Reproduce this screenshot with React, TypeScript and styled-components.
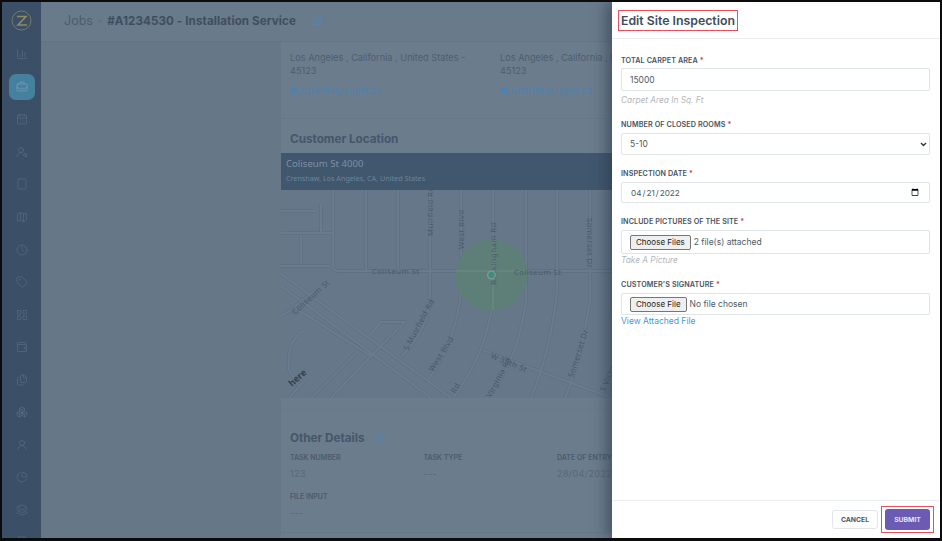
import styled, { createGlobalStyle } from 'styled-components';
import {
  BriefcaseBusiness,
  CalendarDays,
  ChartColumn,
  ChartPie,
  Boxes,
  Clock,
  Files,
  Layers,
  LayoutGrid,
  Mail,
  Map as MapIcon,
  SquarePen,
  Tablet,
  Tag,
  UserRound,
  UserRoundSearch,
  Wallet,
} from 'lucide-react';

const GlobalStyle = createGlobalStyle`
  html, body {
    margin: 0;
    padding: 0;
    width: 942px;
    height: 541px;
    overflow: hidden;
    background: #000;
    font-family: 'Inter', 'Liberation Sans', sans-serif;
  }
  * { box-sizing: border-box; }
`;

const Frame = styled.div`
  position: relative;
  display: flex;
  width: 942px;
  height: 541px;
  overflow: hidden;
  border: 2px solid #0c0c0c;
  border-bottom-width: 3px;
  background: #667788;
`;

const Sidebar = styled.aside`
  display: flex;
  flex-direction: column;
  flex: 0 0 39px;
  overflow: hidden;
  background: #3b4f66;
`;

const LogoSlot = styled.div`
  display: flex;
  flex: 0 0 36px;
  align-items: center;
  justify-content: center;
`;

const SideItem = styled.div<{ $active?: boolean }>`
  display: flex;
  flex: 0 0 32.55px;
  align-items: center;
  justify-content: center;
  color: ${(p) => (p.$active ? '#7fa6bf' : '#5d7187')};

  span {
    display: flex;
    width: 26px;
    height: 26px;
    align-items: center;
    justify-content: center;
    border-radius: 7px;
    background: ${(p) => (p.$active ? '#46809f' : 'transparent')};
  }
`;

const Main = styled.div`
  display: flex;
  flex: 1;
  flex-direction: column;
  min-width: 0;
`;

const Header = styled.header`
  display: flex;
  flex: 0 0 40px;
  align-items: center;
  padding-left: 23px;
  padding-bottom: 2px;
  border-bottom: 1px solid #64758a;
  background: #697a8b;
  color: #4b5a6b;
  font-size: 12.5px;
`;

const Crumb = styled.span`
  color: #4d5d6e;
`;

const CrumbSep = styled.span`
  margin: 0 5px 0 4px;
  color: #5b6b7c;
  font-size: 8px;
`;

const JobTitle = styled.span`
  color: #3f4e5f;
  font-size: 11.6px;
  font-weight: 700;
  letter-spacing: 0.1px;
`;

const EditIcon = styled(SquarePen)`
  color: #5088b8;
`;

const HeaderEdit = styled(EditIcon)`
  margin-left: 16px;
`;

const Workspace = styled.div`
  display: flex;
  flex: 1;
  min-height: 0;
`;

const Blank = styled.div`
  flex: 0 0 240px;
`;

const Content = styled.div`
  flex: 1;
  min-width: 0;
  background: #6b7c8d;
  color: #4e5e6f;
  font-size: 9.2px;
`;

const Addresses = styled.div`
  display: flex;
  height: 77px;
  padding: 9px 0 0 9px;
  border-bottom: 1px solid #677889;
`;

const Address = styled.div`
  width: 210px;
  line-height: 13px;

  p {
    width: 190px;
    margin: 0;
  }
`;

const MailLink = styled.div`
  display: flex;
  align-items: center;
  gap: 2px;
  margin-top: 7px;
  color: #4d82b0;
`;

const SectionTitle = styled.h2`
  display: flex;
  align-items: center;
  gap: 9px;
  margin: 0;
  padding-left: 9px;
  color: #45566a;
  font-size: 11.7px;
  font-weight: 700;
`;

const LocationTitle = styled(SectionTitle)`
  height: 34px;
  padding-top: 6px;
`;

const Banner = styled.div`
  height: 37px;
  padding: 4px 5px 0;
  background: #40576e;
  color: #7d90a4;

  strong {
    display: block;
    font-family: 'Noto Sans', sans-serif;
    font-size: 9.6px;
    font-weight: 400;
    line-height: 14px;
  }

  small {
    display: block;
    margin-top: 3px;
    color: #6f8499;
    font-family: 'Noto Sans', sans-serif;
    font-size: 7.2px;
    line-height: 9px;
  }
`;

const MapBox = styled.div`
  height: 208px;
  overflow: hidden;
  background: #66778a;

  svg {
    display: block;
  }
`;

const OtherDetails = styled.div`
  height: 124px;
  margin-top: 11px;
  padding-top: 21px;
  border-top: 1px solid #687989;
  border-bottom: 1px solid #677889;
`;

const DetailGrid = styled.div`
  display: grid;
  grid-template-columns: 133.5px 133.5px 133.5px;
  row-gap: 13px;
  margin-top: 8px;
  padding: 0 0 0 9px;
`;

const Detail = styled.div`
  line-height: 10px;

  b {
    display: block;
    color: #4c5b6c;
    font-size: 7px;
    font-weight: 600;
  }

  span {
    display: block;
    margin-top: 6px;
    color: #586879;
    font-size: 9px;
    letter-spacing: 0.4px;
  }
`;

const Drawer = styled.section`
  position: absolute;
  top: 0;
  right: 0;
  bottom: 0;
  display: flex;
  flex-direction: column;
  width: 328px;
  background: #fff;
  box-shadow: -6px 0 12px rgba(38, 50, 66, 0.5);
`;

const DrawerHead = styled.div`
  display: flex;
  flex: 0 0 37px;
  align-items: center;
  padding: 0 0 0 6px;
  border-bottom: 1px solid #e9edf1;
`;

const Marked = styled.div`
  border: 1px solid #e8505b;
`;

const DrawerTitle = styled(Marked)`
  padding: 0 2px;
  color: #3f4d5b;
  font-size: 12.3px;
  font-weight: 600;
  line-height: 19px;
`;

const Form = styled.form`
  display: flex;
  flex: 1;
  flex-direction: column;
  gap: 13px;
  padding: 16px 10px 0 9px;
`;

const Field = styled.div``;

const Label = styled.label<{ $tight?: boolean }>`
  display: block;
  margin-bottom: ${(p) => (p.$tight ? 1 : 2)}px;
  color: #47535f;
  font-size: 7.2px;
  font-weight: 600;
  letter-spacing: 0.1px;
  line-height: 12px;
  text-transform: uppercase;

  i {
    color: #d8343f;
    font-style: normal;
  }
`;

const controlBase = `
  display: block;
  width: 100%;
  border: 1px solid #dfe4e8;
  border-radius: 2px;
  background: #fff;
  color: #4f5a65;
  font-family: 'Inter', 'Liberation Sans', sans-serif;
  font-size: 8.5px;
  outline: none;
`;

const TextInput = styled.input`
  ${controlBase}
  height: 23px;
  padding: 0 8px;
`;

const SelectInput = styled.select`
  ${controlBase}
  height: 22px;
  padding: 0 8px;
  appearance: none;
  background-image: url("data:image/svg+xml,%3Csvg xmlns='http://www.w3.org/2000/svg' width='7' height='5'%3E%3Cpath d='M1 1l2.5 2.5L6 1' fill='none' stroke='%23333' stroke-width='1.4'/%3E%3C/svg%3E");
  background-repeat: no-repeat;
  background-position: right 2px center;
`;

const DateInput = styled.input`
  ${controlBase}
  height: 21px;
  padding: 0 8px;
  font-size: 8.2px;
`;

const FileRow = styled.div<{ $tall?: boolean }>`
  ${controlBase}
  display: flex;
  align-items: center;
  gap: 3px;
  height: ${(p) => (p.$tall ? 24 : 22)}px;
  padding: 0 8px;
`;

const NativeButton = styled.button.attrs({ type: 'button' })`
  height: 15px;
  padding: 0 5px;
  border: 1px solid #767676;
  border-radius: 2px;
  background: #efefef;
  color: #222;
  font-family: 'Inter', 'Liberation Sans', sans-serif;
  font-size: 8px;
`;

const Hint = styled.div<{ $gap: number }>`
  margin-top: ${(p) => p.$gap}px;
  color: #b2b7bc;
  font-size: 8.3px;
  font-style: italic;
  line-height: 12px;
`;

const AttachedLink = styled.a`
  display: block;
  color: #3f9ae0;
  font-size: 8.5px;
  line-height: 12px;
`;

const DrawerFoot = styled.div`
  display: flex;
  flex: 0 0 38px;
  align-items: center;
  justify-content: flex-end;
  gap: 3px;
  padding-right: 6px;
  border-top: 1px solid #e9edf1;
`;

const Cancel = styled.button.attrs({ type: 'button' })`
  width: 46px;
  height: 19px;
  border: 1px solid #e3e6ea;
  border-radius: 3px;
  background: #fff;
  color: #4c5863;
  font-family: 'Inter', 'Liberation Sans', sans-serif;
  font-size: 6.8px;
  font-weight: 700;
`;

const SubmitMark = styled(Marked)`
  padding: 2px 3px;
`;

const Submit = styled.button.attrs({ type: 'button' })`
  display: block;
  width: 45px;
  height: 21px;
  border: 0;
  border-radius: 3px;
  background: #6c5bb3;
  color: #e6e3f3;
  font-family: 'Inter', 'Liberation Sans', sans-serif;
  font-size: 6.8px;
  font-weight: 700;
`;

const sideIcons = [
  ChartColumn,
  BriefcaseBusiness,
  CalendarDays,
  UserRoundSearch,
  Tablet,
  MapIcon,
  Clock,
  Tag,
  LayoutGrid,
  Wallet,
  Files,
  Boxes,
  UserRound,
  ChartPie,
  Layers,
  Tablet,
];

const roads = [
  'M52 0V75Q52 81 58 81H331',
  'M85 0V81',
  'M117 0V81',
  'M149 0V110Q147 140 120 167',
  'M180 0V100Q176 150 147 190',
  'M212 0V110Q205 165 172 208',
  'M245 0V110Q238 170 206 208',
  'M276 0V100Q270 160 250 208',
  'M309 0V110Q300 170 284 208',
  'M201 160L331 208',
  'M0 76H48',
  'M0 21H36',
  'M0 43H52',
  'M20 45V74',
  'M40 14V42',
  'M0 84L170 208',
  'M0 96L150 208',
  'M0 126L14 118L90 166L50 208',
  'M24 140Q5 150 8 180L18 196',
  'M90 166L124 132H100L88 146',
  'M26 188L8 208',
  'M75 163L30 208',
  'M14 116L35 100',
];

const labels = [
  { text: 'Coliseum St', x: 91, y: 84, r: 0 },
  { text: 'Coliseum St', x: 233, y: 85, r: 0 },
  { text: 'Coliseum St', x: 14, y: 125, r: -42 },
  { text: 'Muirfield Rd', x: 152, y: 46, r: -90 },
  { text: 'West Blvd', x: 183, y: 59, r: -90 },
  { text: 'Buckingham Rd', x: 215, y: 95, r: -90 },
  { text: 'Somerset Dr', x: 306, y: 28, r: 90 },
  { text: 'S Muirfield Rd', x: 127, y: 161, r: -62 },
  { text: 'West Blvd', x: 152, y: 182, r: -58 },
  { text: 'W 39th St', x: 209, y: 168, r: 22 },
  { text: 'Somerset Dr', x: 292, y: 188, r: -72 },
  { text: 'S Victoria', x: 324, y: 202, r: -68 },
  { text: 'Virginia Rd', x: 210, y: 208, r: -62 },
  { text: 'Rd', x: 174, y: 204, r: -58 },
];

function MapDrawing() {
  return (
    <svg width="331" height="208" viewBox="0 0 331 208">
      <g fill="none" strokeLinejoin="round">
        {roads.map((d) => (
          <path key={d} d={d} stroke="#5e6f81" strokeWidth="3.4" />
        ))}
        {roads.map((d) => (
          <path key={`${d}-in`} d={d} stroke="#6a7b8d" strokeWidth="2.2" />
        ))}
      </g>
      <circle cx="210.5" cy="85" r="36" fill="#5e7f78" />
      <path d="M212 49V120M175 81H246" stroke="#668480" strokeWidth="2.2" fill="none" />
      {labels.map((l) => (
        <text
          key={`${l.text}-${l.x}`}
          x={l.x}
          y={l.y}
          fill="#4a5a6c"
          fontFamily="'Noto Sans', sans-serif"
          fontSize="7.8"
          letterSpacing="0.4"
          transform={l.r ? `rotate(${l.r} ${l.x} ${l.y})` : undefined}
        >
          {l.text}
        </text>
      ))}
      <circle cx="210.5" cy="85" r="4.5" fill="#84979c" />
      <circle cx="210.5" cy="85" r="3.2" fill="#3f8f78" />
      <text x="11" y="197" fill="#33424f" fontFamily="'Noto Sans', sans-serif" fontSize="9" fontWeight="700" transform="rotate(-42 11 197)">
        here
      </text>
    </svg>
  );
}

function Logo() {
  return (
    <svg width="21" height="21" viewBox="0 0 21 21">
      <circle cx="10.5" cy="10.5" r="9.5" fill="none" stroke="#747a6c" strokeWidth="1" />
      <path d="M6 6.5H15L7 15H16" fill="none" stroke="#8f8a62" strokeWidth="1.6" />
    </svg>
  );
}

export default function App() {
  return (
    <>
      <GlobalStyle />
      <Frame>
        <Sidebar>
          <LogoSlot>
            <Logo />
          </LogoSlot>
          {sideIcons.map((Icon, index) => (
            <SideItem key={index} $active={index === 1}>
              <span>
                <Icon size={12} strokeWidth={1.2} />
              </span>
            </SideItem>
          ))}
        </Sidebar>
        <Main>
          <Header>
            <Crumb>Jobs</Crumb>
            <CrumbSep>&gt;</CrumbSep>
            <JobTitle>#A1234530 - Installation Service</JobTitle>
            <HeaderEdit size={10} />
          </Header>
          <Workspace>
            <Blank />
            <Content>
              <Addresses>
                {[0, 1].map((i) => (
                  <Address key={i}>
                    <p>Los Angeles , California , United States - 45123</p>
                    <MailLink>
                      <Mail size={9} fill="#4d82b0" stroke="#6b7c8d" />
                      Charles@Zuper.co
                    </MailLink>
                  </Address>
                ))}
              </Addresses>
              <LocationTitle>Customer Location</LocationTitle>
              <Banner>
                <strong>Coliseum St 4000</strong>
                <small>Crenshaw, Los Angeles, CA, United States</small>
              </Banner>
              <MapBox>
                <MapDrawing />
              </MapBox>
              <OtherDetails>
                <SectionTitle>
                  Other Details
                  <EditIcon size={10} />
                </SectionTitle>
                <DetailGrid>
                  <Detail>
                    <b>TASK NUMBER</b>
                    <span>123</span>
                  </Detail>
                  <Detail>
                    <b>TASK TYPE</b>
                    <span>---</span>
                  </Detail>
                  <Detail>
                    <b>DATE OF ENTRY</b>
                    <span>28/04/2022</span>
                  </Detail>
                  <Detail>
                    <b>FILE INPUT</b>
                    <span>---</span>
                  </Detail>
                </DetailGrid>
              </OtherDetails>
            </Content>
          </Workspace>
        </Main>
        <Drawer>
          <DrawerHead>
            <DrawerTitle>Edit Site Inspection</DrawerTitle>
          </DrawerHead>
          <Form>
            <Field>
              <Label $tight>
                Total Carpet Area <i>*</i>
              </Label>
              <TextInput defaultValue="15000" />
              <Hint $gap={3}>Carpet Area In Sq. Ft</Hint>
            </Field>
            <Field>
              <Label>
                Number Of Closed Rooms <i>*</i>
              </Label>
              <SelectInput defaultValue="5-10">
                <option>5-10</option>
              </SelectInput>
            </Field>
            <Field>
              <Label>
                Inspection Date <i>*</i>
              </Label>
              <DateInput type="date" defaultValue="2022-04-21" />
            </Field>
            <Field>
              <Label>
                Include Pictures Of The Site <i>*</i>
              </Label>
              <FileRow $tall>
                <NativeButton>Choose Files</NativeButton>
                2 file(s) attached
              </FileRow>
              <Hint $gap={0}>Take A Picture</Hint>
            </Field>
            <Field>
              <Label>
                Customer's Signature <i>*</i>
              </Label>
              <FileRow>
                <NativeButton>Choose File</NativeButton>
                No file chosen
              </FileRow>
              <AttachedLink>View Attached File</AttachedLink>
            </Field>
          </Form>
          <DrawerFoot>
            <Cancel>CANCEL</Cancel>
            <SubmitMark>
              <Submit>SUBMIT</Submit>
            </SubmitMark>
          </DrawerFoot>
        </Drawer>
      </Frame>
    </>
  );
}
